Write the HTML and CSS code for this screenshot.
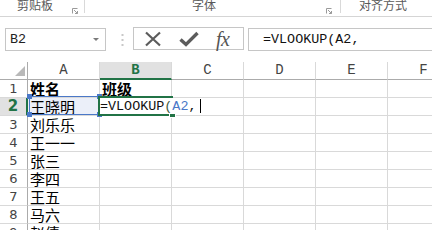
FILE: index.html
```html
<!DOCTYPE html>
<html>
<head>
<meta charset="utf-8">
<link rel="stylesheet" href="styles.css">
</head>
<body>
<div class="ribbon">
  <div class="group g1"><span class="glabel">剪贴板</span><svg class="launcher" width="6" height="6" viewBox="0 0 6 6"><path d="M0.5 5.5V0.5H5.5" fill="none" stroke="#9a9a9a"/><path d="M2 2L5.5 5.5M3 5.5H5.5V3" fill="none" stroke="#9a9a9a"/></svg></div>
  <div class="group g2"><span class="glabel">字体</span><svg class="launcher" width="6" height="6" viewBox="0 0 6 6"><path d="M0.5 5.5V0.5H5.5" fill="none" stroke="#9a9a9a"/><path d="M2 2L5.5 5.5M3 5.5H5.5V3" fill="none" stroke="#9a9a9a"/></svg></div>
  <div class="group g3"><span class="glabel">对齐方式</span></div>
</div>

<div class="fbar">
  <div class="namebox"><span class="mono">B2</span><span class="dd"></span></div>
  <svg class="grip" width="3" height="14" viewBox="0 0 3 14"><rect x="0.5" y="1" width="2" height="2" fill="#c8c8c8"/><rect x="0.5" y="6" width="2" height="2" fill="#c8c8c8"/><rect x="0.5" y="11" width="2" height="2" fill="#c8c8c8"/></svg>
  <div class="btns">
    <svg class="ico" width="18" height="16" viewBox="0 0 18 16"><path d="M2 1.5L16 14.5M16 1.5L2 14.5" stroke="#5c5c5c" stroke-width="2.2" fill="none"/></svg>
    <svg class="ico" width="20" height="16" viewBox="0 0 20 16"><path d="M1.5 8.5L7 13.5L18.5 2" stroke="#5c5c5c" stroke-width="3.4" fill="none"/></svg>
    <span class="fx">fx</span>
  </div>
  <div class="finput"><span class="mono">=VLOOKUP(A2,</span></div>
</div>

<div class="sheet">
  <div class="grid">
    <div class="corner"><svg width="10" height="10" viewBox="0 0 10 10"><path d="M10 0V10H0Z" fill="#b9b9b9"/></svg></div>
    <div class="colh">A</div><div class="colh sel">B</div><div class="colh">C</div><div class="colh">D</div><div class="colh">E</div><div class="colh">F</div>

    <div class="rowh">1</div><div class="cell b">姓名</div><div class="cell b">班级</div><div class="cell"></div><div class="cell"></div><div class="cell"></div><div class="cell"></div>
    <div class="rowh sel">2</div><div class="cell refcell">王晓明</div><div class="cell"></div><div class="cell"></div><div class="cell"></div><div class="cell"></div><div class="cell"></div>
    <div class="rowh">3</div><div class="cell">刘乐乐</div><div class="cell"></div><div class="cell"></div><div class="cell"></div><div class="cell"></div><div class="cell"></div>
    <div class="rowh">4</div><div class="cell">王一一</div><div class="cell"></div><div class="cell"></div><div class="cell"></div><div class="cell"></div><div class="cell"></div>
    <div class="rowh">5</div><div class="cell">张三</div><div class="cell"></div><div class="cell"></div><div class="cell"></div><div class="cell"></div><div class="cell"></div>
    <div class="rowh">6</div><div class="cell">李四</div><div class="cell"></div><div class="cell"></div><div class="cell"></div><div class="cell"></div><div class="cell"></div>
    <div class="rowh">7</div><div class="cell">王五</div><div class="cell"></div><div class="cell"></div><div class="cell"></div><div class="cell"></div><div class="cell"></div>
    <div class="rowh">8</div><div class="cell">马六</div><div class="cell"></div><div class="cell"></div><div class="cell"></div><div class="cell"></div><div class="cell"></div>
    <div class="rowh">9</div><div class="cell">赵倩</div><div class="cell"></div><div class="cell"></div><div class="cell"></div><div class="cell"></div><div class="cell"></div>
  </div>

  <div class="refbox">
    <span class="h tl"></span><span class="h tr"></span><span class="h bl"></span><span class="h br"></span>
  </div>
  <div class="active"><span class="fill"></span></div>
  <div class="editor"><span class="mono">=VLOOKUP<span class="paren">(</span><span class="ref">A2</span>,</span><span class="caret"></span></div>
</div>
</body>
</html>
```

FILE: styles.css
```css
html, body {
  margin: 0;
  padding: 0;
  background: #ffffff;
}
body {
  width: 432px;
  height: 230px;
  overflow: hidden;
  font-family: "Noto Sans CJK SC", "Liberation Sans", sans-serif;
}
.mono {
  font-family: "Liberation Mono", "Noto Sans CJK SC", monospace;
}

/* ribbon strip */
.ribbon {
  display: flex;
  height: 16px;
  border-bottom: 1px solid #d5d5d5;
  overflow: hidden;
}
.group {
  display: flex;
  align-items: flex-start;
  height: 13px;
  box-sizing: border-box;
}
.glabel {
  font-size: 12px;
  line-height: 12px;
  color: #595959;
  margin-top: -1px;
}
.launcher {
  margin-top: 8px;
}
.g1 {
  width: 85px;
  padding-left: 17px;
  border-right: 1px solid #d9d9d9;
}
.g1 .launcher { margin-left: 19px; }
.g2 {
  width: 256px;
  padding-left: 107px;
  border-right: 1px solid #d9d9d9;
}
.g2 .launcher { margin-left: 110px; }
.g3 {
  padding-left: 18px;
}

/* formula bar */
.fbar {
  display: flex;
  align-items: center;
  margin-top: 11px;
  padding-left: 5px;
  height: 23px;
}
.namebox {
  width: 101px;
  height: 23px;
  box-sizing: border-box;
  border: 1px solid #c6c6c6;
  display: flex;
  align-items: center;
  padding-left: 4px;
  font-size: 13.4px;
  color: #222;
}
.dd {
  margin-left: auto;
  margin-right: 6px;
  width: 0;
  height: 0;
  border-left: 3px solid transparent;
  border-right: 3px solid transparent;
  border-top: 3px solid #7a7a7a;
}
.grip {
  margin-left: 15px;
}
.btns {
  margin-left: 9px;
  width: 111px;
  height: 23px;
  box-sizing: border-box;
  border: 1px solid #c6c6c6;
  display: flex;
  align-items: center;
  padding-left: 10px;
  gap: 20px;
  margin-top: -2px;
}
.btns .ico:nth-child(2) { margin-left: -3px; }
.fx {
  font-family: "Liberation Serif", serif;
  font-style: italic;
  font-size: 20px;
  line-height: 20px;
  color: #555;
  margin-left: -3px;
  letter-spacing: -0.5px;
}
.finput {
  margin-left: 4px;
  flex: 1;
  height: 23px;
  box-sizing: border-box;
  border: 1px solid #c6c6c6;
  border-right: none;
  display: flex;
  align-items: center;
  padding-left: 14px;
  font-size: 13.4px;
  color: #111;
}

/* sheet */
.sheet {
  position: relative;
  margin-top: 11px;
}
.grid {
  display: grid;
  grid-template-columns: 28px repeat(6, 72px);
  grid-auto-rows: 18px;
}
.grid > div {
  box-sizing: border-box;
}
.corner {
  border-right: 1px solid #ababab;
  border-bottom: 1px solid #ababab;
  display: flex;
  justify-content: flex-end;
  align-items: flex-end;
  padding: 0 2px 3px 0;
}
.colh {
  border-right: 1px solid #d9d9d9;
  border-bottom: 1px solid #ababab;
  font-family: "Liberation Mono", monospace;
  font-size: 14px;
  line-height: 17px;
  text-align: center;
  color: #444;
}
.colh.sel {
  background: #e1e1e1;
  color: #217346;
  font-weight: bold;
  border-bottom: 2px solid #217346;
}
.rowh {
  border-right: 1px solid #ababab;
  border-bottom: 1px solid #d9d9d9;
  font-family: "DejaVu Sans", sans-serif;
  font-size: 13px;
  line-height: 17px;
  text-align: center;
  color: #444;
}
.rowh.sel {
  background: #e1e1e1;
  color: #217346;
  font-weight: bold;
  font-size: 15px;
  border-right: 2px solid #217346;
}
.cell {
  border-right: 1px solid #d9d9d9;
  border-bottom: 1px solid #d9d9d9;
  font-size: 15px;
  line-height: 17px;
  padding-left: 2px;
  color: #000;
  white-space: nowrap;
}
.cell.b {
  font-weight: bold;
}
.cell.refcell {
  background: #ebeff9;
}

/* A2 reference highlight */
.refbox {
  position: absolute;
  left: 29px;
  top: 34px;
  width: 71px;
  height: 19px;
  box-sizing: border-box;
  border: 1px solid #4a78c8;
}
.h {
  position: absolute;
  width: 5px;
  height: 5px;
  background: #4a78c8;
}
.tl { left: -3px; top: -3px; }
.tr { right: -3px; top: -3px; }
.bl { left: -3px; bottom: -3px; }
.br { right: -3px; bottom: -3px; }

/* B2 active cell */
.active {
  position: absolute;
  left: 98px;
  top: 34px;
  width: 75px;
  height: 20px;
  box-sizing: border-box;
  border: 2px solid #217346;
  border-right: none;
}
.fill {
  position: absolute;
  right: -3px;
  bottom: -4px;
  width: 5px;
  height: 5px;
  background: #217346;
  border: 1px solid #fff;
}
.editor {
  position: absolute;
  left: 100px;
  top: 36px;
  width: 102px;
  height: 16px;
  background: #fff;
  display: flex;
  align-items: center;
  font-size: 13.4px;
  color: #111;
}
.paren { color: #3d5a3d; }
.ref { color: #4a78c8; }
.caret {
  margin-left: 4px;
  width: 1px;
  height: 14px;
  background: #000;
}
```
